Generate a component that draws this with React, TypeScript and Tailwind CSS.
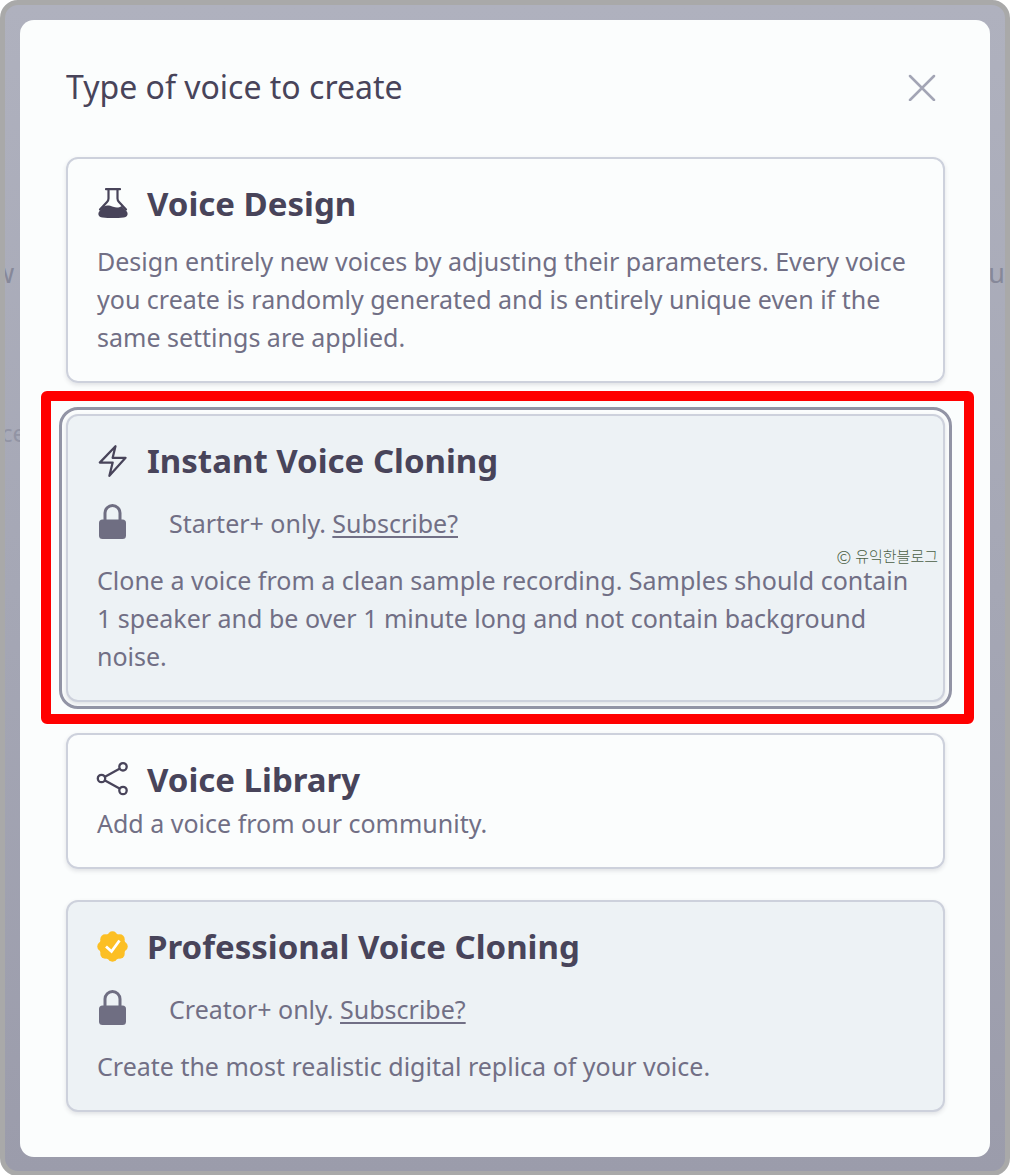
import React from "react";

const ink = "text-[#48445a]";

function FlaskIcon() {
  return (
    <svg viewBox="0 0 32 32" className={`size-8 shrink-0 ${ink}`} fill="none" stroke="currentColor" strokeWidth="2.2" strokeLinecap="round" strokeLinejoin="round">
      <path d="M9 1.200h14M11.500 1.200v9.300c0 1.500-.6 2.500-1.500 3.500L3 21.500M20.500 1.200v9.300c0 1.500.6 2.500 1.500 3.500l7 7.500" />
      <path d="M6.500 18.500c3.500-1.500 6-1 9.500.3 3.500 1.200 6 1 8.500-.8l4.500 4.500c3 3.200 1.600 6.500-2.500 7-6.500.8-14.500.8-21 0-4.100-.5-5.500-3.800-2.500-7z" fill="currentColor" stroke="none" />
    </svg>
  );
}

function BoltIcon() {
  return (
    <svg viewBox="2.500 2.500 19 20" className={`size-8 shrink-0 ${ink}`} fill="none" stroke="currentColor" strokeWidth="1.4" strokeLinecap="round" strokeLinejoin="round">
      <path d="m3.750 13.500 9.800-10.200L11.800 10.500h8.050L9.750 21.750 11.800 13.500H3.750Z" />
    </svg>
  );
}

function ShareIcon() {
  return (
    <svg viewBox="0 0 32 32" className={`size-8 shrink-0 ${ink}`} fill="none" stroke="currentColor" strokeWidth="2.300" overflow="visible">
      <circle cx="4.500" cy="14.500" r="3.700" />
      <circle cx="26" cy="2.800" r="3.700" />
      <circle cx="26" cy="26.500" r="3.700" />
      <path d="m8 12.700 14.500-7.900M8 16.400l14.500 8.200" />
    </svg>
  );
}

function BadgeIcon() {
  return (
    <svg viewBox="0 0 32 32" className="size-8 shrink-0">
      <g fill="#fcbf24">
        <circle cx="15.500" cy="15.500" r="13.300" />
        <circle cx="15.500" cy="5.200" r="4.900" />
        <circle cx="22.800" cy="8.200" r="4.900" />
        <circle cx="25.800" cy="15.500" r="4.900" />
        <circle cx="22.800" cy="22.800" r="4.900" />
        <circle cx="15.500" cy="25.800" r="4.900" />
        <circle cx="8.200" cy="22.800" r="4.900" />
        <circle cx="5.200" cy="15.500" r="4.900" />
        <circle cx="8.200" cy="8.200" r="4.900" />
      </g>
      <path d="m9 15.500 5.500 5 8-11" fill="none" stroke="white" strokeWidth="2.800" />
    </svg>
  );
}

function LockIcon() {
  return (
    <svg viewBox="0 0 32 38" className="h-[38px] w-8 shrink-0 text-[#6f6e82]">
      <rect x="2" y="15.500" width="27" height="19.500" rx="3.500" fill="currentColor" />
      <path d="M8 17V9a7.500 7.500 0 0 1 15 0v8" fill="none" stroke="currentColor" strokeWidth="3" />
    </svg>
  );
}

function CardTitle({ icon, children }: { icon: React.ReactNode; children: React.ReactNode }) {
  return (
    <h2 className={`text-[33px] font-bold ${ink}`}>
      <button type="button" className="flex h-12 items-center gap-[18px] whitespace-nowrap">
        {icon}
        {children}
      </button>
    </h2>
  );
}

function PlanNotice({ plan }: { plan: string }) {
  return (
    <div className="my-[19px] flex items-center gap-10">
      <LockIcon />
      <p>
        {plan} only.{" "}
        <a href="#subscribe" className="underline decoration-2 underline-offset-3">
          Subscribe?
        </a>
      </p>
    </div>
  );
}

const card =
  "rounded-xl border-2 border-[#cdd1dc] px-[29px] pt-[21px] pb-[25px] shadow-[0_2px_4px_rgba(70,70,90,0.15)]";

export default function App() {
  return (
    <div className="relative overflow-hidden rounded-[18px] border-[5px] border-[#a9a9a9] bg-linear-to-b from-[#afb1be] via-[#a5a7b5] to-[#9b9cab] p-[15px] pb-3.5 font-['Noto_Sans','Noto_Sans_CJK_KR',sans-serif]">
      {/* Page behind the dialog */}
      <div aria-hidden="true" className="text-[27px] text-[#868899]">
        <span className="absolute top-[248px] -left-3">w</span>
        <span className="absolute top-[248px] right-0">u</span>
        <span className="absolute top-[410px] -left-1 text-[24px] text-[#9294a4]">ce</span>
      </div>

      <main
        role="dialog"
        aria-labelledby="dialog-title"
        className="relative rounded-[14px] bg-[#fbfdfd] pt-[46px] pr-[45px] pb-[45px] pl-[46px] text-[25px] leading-[38px] text-[#716f85]"
      >
        <header className="mb-[49px] flex h-[42px] items-center justify-between">
          <h1 id="dialog-title" className={`text-[32px] ${ink}`}>
            Type of voice to create
          </h1>
          <button type="button" aria-label="Close" className="mr-[9px] text-[#a3a5b5]">
            <svg viewBox="0 0 28 28" className="size-7" fill="none" stroke="currentColor" strokeWidth="2.500" strokeLinecap="round">
              <path d="m2 3 24 24M26 3 2 27" />
            </svg>
          </button>
        </header>

        <div className="flex flex-col gap-[31px]">
          <section className={card}>
            <CardTitle icon={<FlaskIcon />}>Voice Design</CardTitle>
            <p className="mt-3.5">
              Design entirely new voices by adjusting their parameters. Every voice
              <br />
              you create is randomly generated and is entirely unique even if the
              <br />
              same settings are applied.
            </p>
          </section>

          <section className={`relative bg-[#edf2f5] outline-3 outline-offset-4 outline-[#9294a5] ${card}`}>
            <CardTitle icon={<BoltIcon />}>Instant Voice Cloning</CardTitle>
            <PlanNotice plan="Starter+" />
            <p>
              Clone a voice from a clean sample recording. Samples should contain
              <br />
              1 speaker and be over 1 minute long and not contain background
              <br />
              noise.
            </p>
            {/* Red highlight frame */}
            <div className="pointer-events-none absolute -top-[25px] -right-[31px] -bottom-6 -left-[27px] rounded-md border-10 border-[#ff0000] ring-1 ring-white" />
            <small className="absolute top-[130px] right-[5px] flex items-center gap-1 text-[15px] leading-5 text-[#4b5f45]">
              <span className="font-['Noto_Sans_CJK_KR',sans-serif] text-[18px] font-light">©</span>
              <span className="font-['Noto_Sans_CJK_KR',sans-serif] font-light">유익한블로그</span>
            </small>
          </section>

          <section className={card}>
            <CardTitle icon={<ShareIcon />}>Voice Library</CardTitle>
            <p>Add a voice from our community.</p>
          </section>

          <section className={`bg-[#edf2f5] ${card}`}>
            <CardTitle icon={<BadgeIcon />}>Professional Voice Cloning</CardTitle>
            <PlanNotice plan="Creator+" />
            <p>Create the most realistic digital replica of your voice.</p>
          </section>
        </div>
      </main>
    </div>
  );
}
